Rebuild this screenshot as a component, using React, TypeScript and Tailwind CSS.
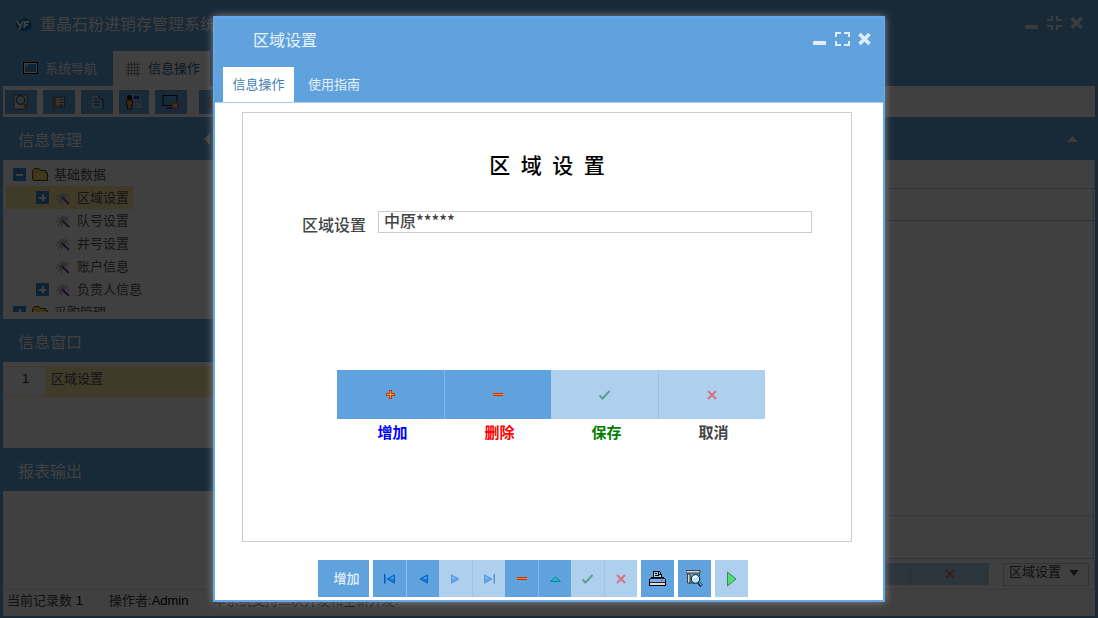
import React from 'react';

const BUTTON = 'bg-[#5fa2dd] flex items-center justify-center';
const BUTTON_DISABLED = 'bg-[#afcfee] flex items-center justify-center';

const treeItems = [
    { label: '区域设置', expandable: true, selected: true },
    { label: '队号设置', expandable: false, selected: false },
    { label: '井号设置', expandable: false, selected: false },
    { label: '账户信息', expandable: false, selected: false },
    { label: '负责人信息', expandable: true, selected: false },
];

const LogoIcon = () => (
    <svg width="16" height="14" viewBox="0 0 16 14">
        <path d="M0 7Q0 2 5 2Q8-1 11 1Q16 3 16 8Q15 13 9 13H5Q0 12 0 7Z" fill="#1679b5" />
        <path d="M1 3L4 8M7 3L3 12M8 10L9 4H13M8 7H12" fill="none" stroke="#fff" strokeWidth="1.8" />
    </svg>
);

const ScreenIcon = () => (
    <svg width="15" height="13" viewBox="0 0 15 13" shapeRendering="crispEdges">
        <rect x="0.5" y="0.5" width="14" height="11" fill="#eef6fc" stroke="#000" />
        <rect x="2" y="2" width="11" height="8" fill="#3f8fce" />
        <path d="M2 10V5L7 2H2Z" fill="#8cc5ee" />
    </svg>
);

const GridIcon = () => (
    <svg width="14" height="14" viewBox="0 0 14 14" shapeRendering="crispEdges">
        <path d="M2.5 0V14M5.5 0V14M8.5 0V14M11.5 0V14M0 2.5H14M0 5.5H14M0 8.5H14M0 11.5H14" stroke="#999" fill="none" />
    </svg>
);

const SearchIcon = () => (
    <svg width="16" height="16" viewBox="0 0 16 16">
        <path d="M1 1H14V13L11 15H1Z" fill="#ddd" stroke="#444" strokeWidth="0.8" />
        <circle cx="7.5" cy="6" r="4.3" fill="#9fdcf8" stroke="#222" />
        <path d="M10.5 9.5L14 14" stroke="#c65a1d" strokeWidth="2.5" />
    </svg>
);

const FormIcon = () => (
    <svg width="14" height="14" viewBox="0 0 16 16">
        <rect x="1.5" y="2.5" width="13" height="11" fill="#ddd" stroke="#345" />
        <rect x="2" y="3" width="3" height="10" fill="#b66b4a" />
        <path d="M7 5.5H8M7 8.5H8M7 11.5H8M9 5.5H13M9 8.5H13M9 11.5H13" stroke="#111" />
    </svg>
);

const PageIcon = () => (
    <svg width="14" height="16" viewBox="0 0 14 16">
        <path d="M1.5 1.5H9L12.5 5V14.5H1.5Z" fill="#8cc8ed" stroke="#6fa5cc" />
        <path d="M9 1V5H13V15M4 5H7M4 8H10M4 11H10" fill="none" stroke="#245" />
    </svg>
);

const UserIcon = () => (
    <svg width="18" height="16" viewBox="0 0 18 16">
        <rect x="8" y="1" width="7" height="5" fill="#2b37d8" stroke="#ddd" />
        <path d="M8 10H16V13H10" fill="none" stroke="#bbb" strokeWidth="2" />
        <circle cx="4.5" cy="3.5" r="2.5" fill="#111" />
        <path d="M1.5 6H7.5V11H6.5V15H2.5V11H1.5Z" fill="#e2a03a" stroke="#111" strokeWidth="0.8" />
    </svg>
);

const MonitorIcon = () => (
    <svg width="18" height="16" viewBox="0 0 18 16">
        <rect x="1" y="1.5" width="14" height="10" fill="#57a7d9" stroke="#111" />
        <path d="M4 14H10" stroke="#111" />
        <circle cx="13" cy="11.5" r="4" fill="#c64fb7" />
        <path d="M13 7.5A4 4 0 0 0 9 12L13 11.5Z" fill="#43ad58" />
        <circle cx="13" cy="11.5" r="2.2" fill="#f1d73b" />
    </svg>
);

const FolderIcon = () => (
    <svg width="16" height="14" viewBox="0 0 16 14">
        <path d="M.5 11.5V3L2.5 .5H7L8.5 2.5H13.5V4.5H15.5V12.5H2Z" fill="#f5c94c" stroke="#6c4a00" />
        <path d="M3.5 5.5H14V11H3.5Z" fill="#ffe88b" />
    </svg>
);

const ToolIcon = () => (
    <svg width="14" height="14" viewBox="0 0 14 14">
        <path d="M4 3L7 1L9 3L12 2V5L8 8L6 12L3 10L2 6Z" fill="#c4c4c4" />
        <path d="M1 5H2M0 8H1M2 11H3M5 13H6M9 0H10M12 7H13" stroke="#666" />
        <path d="M6 6L13 13" stroke="#9334c5" strokeWidth="2" />
        <path d="M6 7L12 13" stroke="#444" strokeWidth="0.6" />
    </svg>
);

const Expander = ({ open = false }: { open?: boolean }) => (
    <svg width="13" height="13" viewBox="0 0 13 13" shapeRendering="crispEdges">
        <rect width="13" height="13" fill="#3c8dcf" />
        <path d={open ? 'M3 6.5H10' : 'M3 6.5H10M6.5 3V10'} stroke="#fff" strokeWidth="2" />
    </svg>
);

const WindowTools = ({ maximized = false }: { maximized?: boolean }) => (
    <div className="flex items-center gap-2 text-[#e1edf9]">
        <button aria-label="最小化">
            <svg width="14" height="14" viewBox="0 0 14 14">
                <rect y="9" width="13" height="4" rx="1" fill="currentColor" />
            </svg>
        </button>
        <button aria-label="最大化">
            <svg width="15" height="14" viewBox="0 0 15 14" fill="none" stroke="currentColor" strokeWidth="2">
                <path d={maximized ? 'M5 0V4H0M10 0V4H15M5 14V10H0M10 14V10H15' : 'M1 5V1H6M9 1H14V5M1 9V13H6M9 13H14V9'} />
            </svg>
        </button>
        <button aria-label="关闭">
            <svg width="13" height="14" viewBox="0 0 13 14" stroke="currentColor" strokeWidth="3.6">
                <path d="M1.5 2L11.5 12M11.5 2L1.5 12" />
            </svg>
        </button>
    </div>
);

const PlusIcon = () => (
    <svg width="10" height="10" viewBox="0 0 10 10" shapeRendering="crispEdges">
        <path d="M3 0H6V3H9V6H6V9H3V6H0V3H3Z" fill="#c9300b" />
        <path d="M4 1H5V4H8V5H5V8H4V5H1V4H4Z" fill="#ffa51f" />
    </svg>
);

const MinusIcon = () => (
    <svg width="10" height="3" viewBox="0 0 10 3" shapeRendering="crispEdges">
        <path d="M0 0H10V3H0Z" fill="#cf2f08" />
        <path d="M0 1H10V2H0Z" fill="#ff8a10" />
    </svg>
);

const CheckIcon = () => (
    <svg width="11" height="10" viewBox="0 0 11 10">
        <path d="M.5 5.5L3.5 8.5L10.5 1" fill="none" stroke="#57a587" strokeWidth="2" />
    </svg>
);

const CrossIcon = () => (
    <svg width="10" height="10" viewBox="0 0 10 10">
        <path d="M1 1L9 9M9 1L1 9" stroke="#d27480" strokeWidth="2" />
    </svg>
);

const ArrowIcon = ({ flip = false, bar = false, dim = false }: { flip?: boolean; bar?: boolean; dim?: boolean }) => (
    <svg width="12" height="10" viewBox="0 0 12 10" opacity={dim ? 0.5 : 1}>
        <g transform={flip ? 'matrix(-1 0 0 1 12 0)' : undefined}>
            {bar && <path d="M.75 0V9.5" stroke="#0757b5" strokeWidth="1.5" />}
            <path d="M3 5L10.5 .8V9.2Z" fill="#0e7ce0" stroke="#0654b4" strokeWidth="0.8" />
            <path d="M6 4.5L9.5 2.5V4.5Z" fill="#6fc0fa" />
        </g>
    </svg>
);

const UpIcon = () => (
    <svg width="11" height="6" viewBox="0 0 11 6">
        <path d="M.5 5.5L5.5 .8L10.5 5.5Z" fill="#21bcc9" stroke="#077787" strokeWidth="0.8" />
    </svg>
);

const PrintIcon = () => (
    <svg width="17" height="17" viewBox="0 0 17 17" shapeRendering="crispEdges">
        <path d="M4.5 8.5V1.5H10.5L12.5 4.5V8.5" fill="#9cc9ef" stroke="#000" />
        <path d="M9.5 1V4.5H12M6 3.5H8M6 5.5H10" stroke="#000" fill="none" />
        <path d="M2.5 7.5H14.5L16.5 9.5V15.5H.5V9.5Z" fill="#d8dce3" stroke="#000" />
        <path d="M1 9H16V12H1Z" fill="#72b1ea" />
        <path d="M2 8.5H15M1 12.5H16" stroke="#223" />
        <path d="M12 10.5H14" stroke="#e44" />
    </svg>
);

const PreviewIcon = () => (
    <svg width="17" height="17" viewBox="0 0 17 17">
        <path d="M0 .5H14V3H0ZM1.5 4H4V13H1.5ZM12 4H13.5V6" fill="#d7d7cf" stroke="#222" strokeWidth="0.8" />
        <path d="M3 13H8" stroke="#333" />
        <circle cx="9.5" cy="9" r="4.3" fill="#b9e6fb" stroke="#111" />
        <path d="M7 8Q8 5.5 11 6.5" stroke="#fff" strokeWidth="1.5" fill="none" />
        <path d="M12.5 12.5L15.5 16" stroke="#111" strokeWidth="3" />
        <path d="M13 12.5L15.5 15.5" stroke="#55b6ec" strokeWidth="1.2" />
    </svg>
);

const PlayIcon = () => (
    <svg width="12" height="16" viewBox="0 0 12 16">
        <path d="M1.5 1L10 8L1.5 15Z" fill="#4be36b" stroke="#42806b" />
    </svg>
);

const SectionTitle = ({ children }: { children: React.ReactNode }) => (
    <h2 className="flex h-[43px] items-center justify-between bg-[#5fa2dd] pt-1 pl-[15px] text-base text-white">{children}</h2>
);

const Sidebar = () => (
    <aside className="w-[210px] shrink-0">
        <SectionTitle>
            信息管理
            <svg className="mr-[3px] mb-1" width="6" height="12" viewBox="0 0 6 12"><path d="M6 0V12L0 6Z" fill="#fff" /></svg>
        </SectionTitle>
        <div className="h-[159px] pb-[7px]">
            <ul className="h-full overflow-hidden pt-[3px] pl-[3px] text-[#555]">
                <li className="flex h-[23px] items-center gap-1.5 pl-[7px]">
                    <Expander open />
                    <FolderIcon />
                    <span>基础数据</span>
                </li>
                {treeItems.map((item) => (
                    <li key={item.label} className="flex h-[23px]">
                        <div className={`flex items-center gap-[7px] pl-[30px] pr-1 ${item.selected ? 'bg-[#ffe8a0]' : ''}`}>
                            <span className="w-[13px]">{item.expandable && <Expander />}</span>
                            <ToolIcon />
                            <span>{item.label}</span>
                        </div>
                    </li>
                ))}
                <li className="flex h-[23px] items-center gap-1.5 pl-[7px]">
                    <Expander />
                    <FolderIcon />
                    <span>采购管理</span>
                </li>
            </ul>
        </div>
        <SectionTitle>信息窗口</SectionTitle>
        <div className="h-[86px] pt-1 pl-[3px]">
            <div className="flex h-[31px] border-y border-[#ffe8a0] text-[#555]">
                <span className="w-[39px] pt-0.5 text-center text-[#222]">1</span>
                <span className="flex-1 bg-[#ffe8a0] pt-0.5 pl-1.5">区域设置</span>
            </div>
        </div>
        <SectionTitle>报表输出</SectionTitle>
    </aside>
);

const Workspace = () => (
    <div className="flex h-screen min-h-[618px] flex-col border-x-[3px] border-b-2 border-[#5fa2dd] bg-white">
        <header className="bg-[#5fa2dd]">
            <div className="flex h-[51px] items-center justify-between pr-3 pl-[13px]">
                <h1 className="flex items-center gap-2 pb-0.5 text-base text-white"><LogoIcon />重晶石粉进销存管理系统</h1>
                <div className="pb-1.5"><WindowTools maximized /></div>
            </div>
            <nav className="flex h-[35px] text-white">
                <button className="flex w-[110px] items-center gap-[7px] pl-5"><ScreenIcon />系统导航</button>
                <button className="flex w-[97px] items-center gap-2 bg-white pl-[13px] text-[#34699a]"><GridIcon />信息操作</button>
            </nav>
        </header>
        <div className="flex h-[31px] items-center gap-1.5 pl-0.5">
            <button aria-label="查询" className={`${BUTTON} h-6 w-8`}><SearchIcon /></button>
            <button aria-label="表单" className={`${BUTTON} h-6 w-8`}><FormIcon /></button>
            <button aria-label="文档" className={`${BUTTON} h-6 w-8`}><PageIcon /></button>
            <button aria-label="用户" className={`${BUTTON} h-6 w-[30px]`}><UserIcon /></button>
            <button aria-label="系统" className={`${BUTTON} h-6 w-8`}><MonitorIcon /></button>
            <button aria-label="列表" className={`${BUTTON} ml-1.5 h-6 w-8`}><FormIcon /></button>
        </div>
        <div className="flex flex-1">
            <Sidebar />
            <main className="flex flex-1 flex-col">
                <div className="flex h-[43px] items-center justify-end bg-[#5fa2dd] pr-[17px]">
                    <svg width="11" height="6" viewBox="0 0 11 6"><path d="M0 6L5.5 0L11 6Z" fill="#eee" /></svg>
                </div>
                <div className="h-[29px] border-r border-b border-[#c6d7e8]" />
                <div className="mr-px h-8 border-r border-b border-[#c0c5ca]" />
                <div className="mr-px flex-1 border-r border-b border-[#d5dfe9]" />
                <div className="mr-px h-[43px] border-r border-b border-[#c6d7e8]" />
                <div className="flex h-[30px] items-center justify-end gap-3.5 border-r border-[#d8d8d8] pr-[5px]">
                    <div className="flex">
                        <button aria-label="确认" className={`${BUTTON_DISABLED} h-[22px] w-20`}><CheckIcon /></button>
                        <button aria-label="取消" className={`${BUTTON_DISABLED} h-[22px] w-[79px] border-l border-[#94bfe0]`}>
                            <CrossIcon />
                        </button>
                    </div>
                    <div className="relative">
                        <select aria-label="区域" className="h-[23px] w-[86px] appearance-none border border-[#ccc] bg-white pb-1.5 pl-[5px] text-[13px] leading-4 text-[#444]">
                            <option>区域设置</option>
                        </select>
                        <svg className="pointer-events-none absolute top-2 right-2.5" width="10" height="6" viewBox="0 0 10 6">
                            <path d="M0 0H10L5 6Z" fill="#555" />
                        </svg>
                    </div>
                </div>
            </main>
        </div>
        <footer className="flex h-[27px] items-center border-t border-[#e8e8e8] pb-1 pl-1 text-[13px] text-[#444]">
            <span className="w-[102px]">当前记录数 <b className="font-medium text-black">1</b></span>
            <span className="w-[104px]">操作者:<b className="font-medium text-black">Admin</b></span>
            <span>本系统支持二次开发和全新开发!</span>
        </footer>
    </div>
);

const RegionDialog = () => (
    <div role="dialog" aria-label="区域设置" className="w-[672px] max-w-full border-2 border-[#62a8ea] bg-white pb-[3px] shadow-[0_0_8px_#888]">
        <div className="border-b border-[#a6cdf0] bg-[#5fa2dd]">
            <div className="flex h-[49px] items-center justify-between pr-3 pl-[38px]">
                <h2 className="pb-1 text-base text-[#eaf3fb]">区域设置</h2>
                <div className="pb-2"><WindowTools /></div>
            </div>
            <div className="flex h-[35px] pl-2" role="tablist">
                <button role="tab" aria-selected="true" className="w-[71px] bg-white text-[#4280b7]">信息操作</button>
                <button role="tab" aria-selected="false" className="w-20 text-[#e6f0fa]">使用指南</button>
            </div>
        </div>
        <div className="mt-[9px] mr-[31px] ml-[27px] h-[430px] border border-[#ccc] pt-[39px]">
            <h3 className="text-center text-[21px] leading-7 font-medium text-black">{'区\u2002域\u2002设\u2002置'}</h3>
            <div className="mt-7 flex items-center pr-[39px] pl-[59px] font-['Noto_Sans_CJK_SC',sans-serif] text-base font-medium text-[#444]">
                <label htmlFor="region" className="w-[76px] pt-1">区域设置</label>
                <input id="region" defaultValue="中原*****" className="h-[22px] min-w-0 flex-1 border border-[#ccc] pb-1 pl-[5px] leading-4" />
            </div>
            <div className="mt-[134px] mr-[86px] ml-[94px] grid grid-cols-4 text-center text-[15px] leading-5 font-bold">
                <button className="text-[#00f]">
                    <span className={`${BUTTON} mb-1 h-[49px]`}><PlusIcon /></span><span className="pl-1">增加</span>
                </button>
                <button className="text-[#f00]">
                    <span className={`${BUTTON} mb-1 h-[49px] border-l border-[#80b9e3]`}><MinusIcon /></span><span className="pl-1">删除</span>
                </button>
                <button className="text-[#008000]">
                    <span className={`${BUTTON_DISABLED} mb-1 h-[49px]`}><CheckIcon /></span><span className="pl-1">保存</span>
                </button>
                <button className="text-[#444]">
                    <span className={`${BUTTON_DISABLED} mb-1 h-[49px] border-l border-[#94c2e2]`}><CrossIcon /></span><span className="pl-1">取消</span>
                </button>
            </div>
        </div>
        <div className="mt-[18px] flex justify-center gap-1 pr-8">
            <button className={`${BUTTON} h-[37px] w-[51px] pl-1.5 font-medium text-[#e6f0fa]`}>增加</button>
            <div className="flex">
                <button aria-label="首条" className={`${BUTTON} h-[37px] w-[33px]`}><ArrowIcon bar /></button>
                <button aria-label="上一条" className={`${BUTTON} h-[37px] w-[33px] border-l border-[#94c2e8]`}><ArrowIcon /></button>
                <button aria-label="下一条" className={`${BUTTON_DISABLED} h-[37px] w-[33px]`}><ArrowIcon flip dim /></button>
                <button aria-label="末条" className={`${BUTTON_DISABLED} h-[37px] w-[33px] border-l border-[#9ac6e4]`}><ArrowIcon flip bar dim /></button>
                <button aria-label="删除" className={`${BUTTON} h-[37px] w-[33px]`}><MinusIcon /></button>
                <button aria-label="编辑" className={`${BUTTON} h-[37px] w-[33px] border-l border-[#80b9e3]`}><UpIcon /></button>
                <button aria-label="保存" className={`${BUTTON_DISABLED} h-[37px] w-[33px]`}><CheckIcon /></button>
                <button aria-label="取消" className={`${BUTTON_DISABLED} h-[37px] w-[33px] border-l border-[#9ac6e4]`}><CrossIcon /></button>
            </div>
            <button aria-label="打印" className={`${BUTTON} h-[37px] w-[33px]`}><PrintIcon /></button>
            <button aria-label="预览" className={`${BUTTON} h-[37px] w-[33px]`}><PreviewIcon /></button>
            <button aria-label="执行" className={`${BUTTON_DISABLED} h-[37px] w-[33px]`}><PlayIcon /></button>
        </div>
    </div>
);

export default function App() {
    return (
        <div className="relative font-['Liberation_Sans','Noto_Sans_CJK_SC',sans-serif] text-[13px]">
            <Workspace />
            <div className="absolute inset-0 flex items-center justify-center bg-black/75">
                <RegionDialog />
            </div>
        </div>
    );
}
